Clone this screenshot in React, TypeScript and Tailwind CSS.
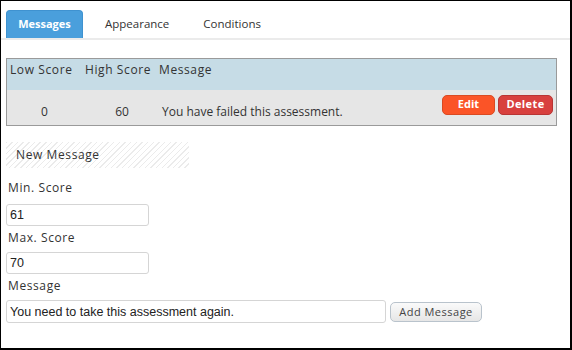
import React from "react";

export default function App() {
  const label = "font-['Open_Sans',sans-serif] text-[12px] tracking-[0.6px] text-[#333]";
  const inputCls =
    "w-[143px] h-[22px] border border-[#d5d5d5] rounded-[3px] px-[3px] text-[12.5px] font-['Liberation_Sans',sans-serif] text-[#222] outline-none";
  return (
    <div className="w-[572px] h-[350px] bg-white border-l border-t border-r-2 border-b-2 border-black overflow-hidden font-['Open_Sans',sans-serif] text-[#333]">
      {/* tabs */}
      <div className="flex items-end pt-[9px] pl-[5px] border-b-2 border-[#ebebeb] h-[39px]">
        <div className="w-[77px] h-[28px] rounded-t-[4px] bg-[#4a9fdc] border border-[#3f92d0] border-b-0 flex items-center justify-center text-white text-[11px] font-bold">
          Messages
        </div>
        <div className="ml-[22px] h-[28px] flex items-center text-[11.5px] text-[#333]">Appearance</div>
        <div className="ml-[34px] h-[28px] flex items-center text-[11.5px] text-[#333]">Conditions</div>
      </div>

      {/* table */}
      <div className="mt-[18px] ml-[5px] w-[551px] border border-[#9a9a9a]">
        <div className="h-[31px] bg-[#c6dce6] flex items-start pt-[3px] leading-[16px] text-[12px] tracking-[0.6px] text-[#333]">
          <div className="w-[78px] pl-[3px]">Low Score</div>
          <div className="w-[74px]">High Score</div>
          <div>Message</div>
        </div>
        <div className="h-[35px] bg-[#e6e6e6] flex items-center text-[12px] text-[#333]">
          <div className="w-[75px] text-center pt-[8px]">0</div>
          <div className="w-[80px] text-center pt-[8px]">60</div>
          <div className="flex-1 pt-[8px]">You have failed this assessment.</div>
          <div className="flex gap-[3px] mr-[3px] mb-[6px]">
            <button className="w-[53px] h-[20px] rounded-[5px] bg-[#fb5427] border border-[#d94a22] text-white text-[11px] font-bold">Edit</button>
            <button className="w-[55px] h-[20px] rounded-[5px] bg-[#d8403e] border border-[#b83534] text-white text-[11px] font-bold tracking-[0.4px]">Delete</button>
          </div>
        </div>
      </div>

      {/* new message */}
      <div className="mt-[16px] ml-[5px] w-[183px] h-[26px] flex items-center pl-[10px] bg-[repeating-linear-gradient(135deg,#ebebeb_0px,#ebebeb_1px,#ffffff_1px,#ffffff_4px)]">
        <span className={label}>New Message</span>
      </div>

      <div className="ml-[5px] mt-[12px] flex flex-col">
        <div className={label + " pl-[2px] leading-[16px]"}>Min. Score</div>
        <input readOnly value="61" className={inputCls + " mt-[8px]"} />
        <div className={label + " pl-[2px] mt-[4px] leading-[16px]"}>Max. Score</div>
        <input readOnly value="70" className={inputCls + " mt-[6px]"} />
        <div className={label + " pl-[2px] mt-[4px] leading-[16px]"}>Message</div>
        <div className="mt-[6px] flex items-center">
          <input
            readOnly
            value="You need to take this assessment again."
            className="w-[380px] h-[23px] border border-[#d5d5d5] rounded-[3px] px-[3px] text-[12.5px] font-['Liberation_Sans',sans-serif] text-[#222] outline-none"
          />
          <button className="ml-[4px] mt-[1px] w-[92px] h-[20px] rounded-[5px] border border-[#b9c3cc] bg-gradient-to-b from-[#fafafa] to-[#e6e6e6] text-[11px] text-[#444] tracking-[0.5px]">
            Add Message
          </button>
        </div>
      </div>
    </div>
  );
}
